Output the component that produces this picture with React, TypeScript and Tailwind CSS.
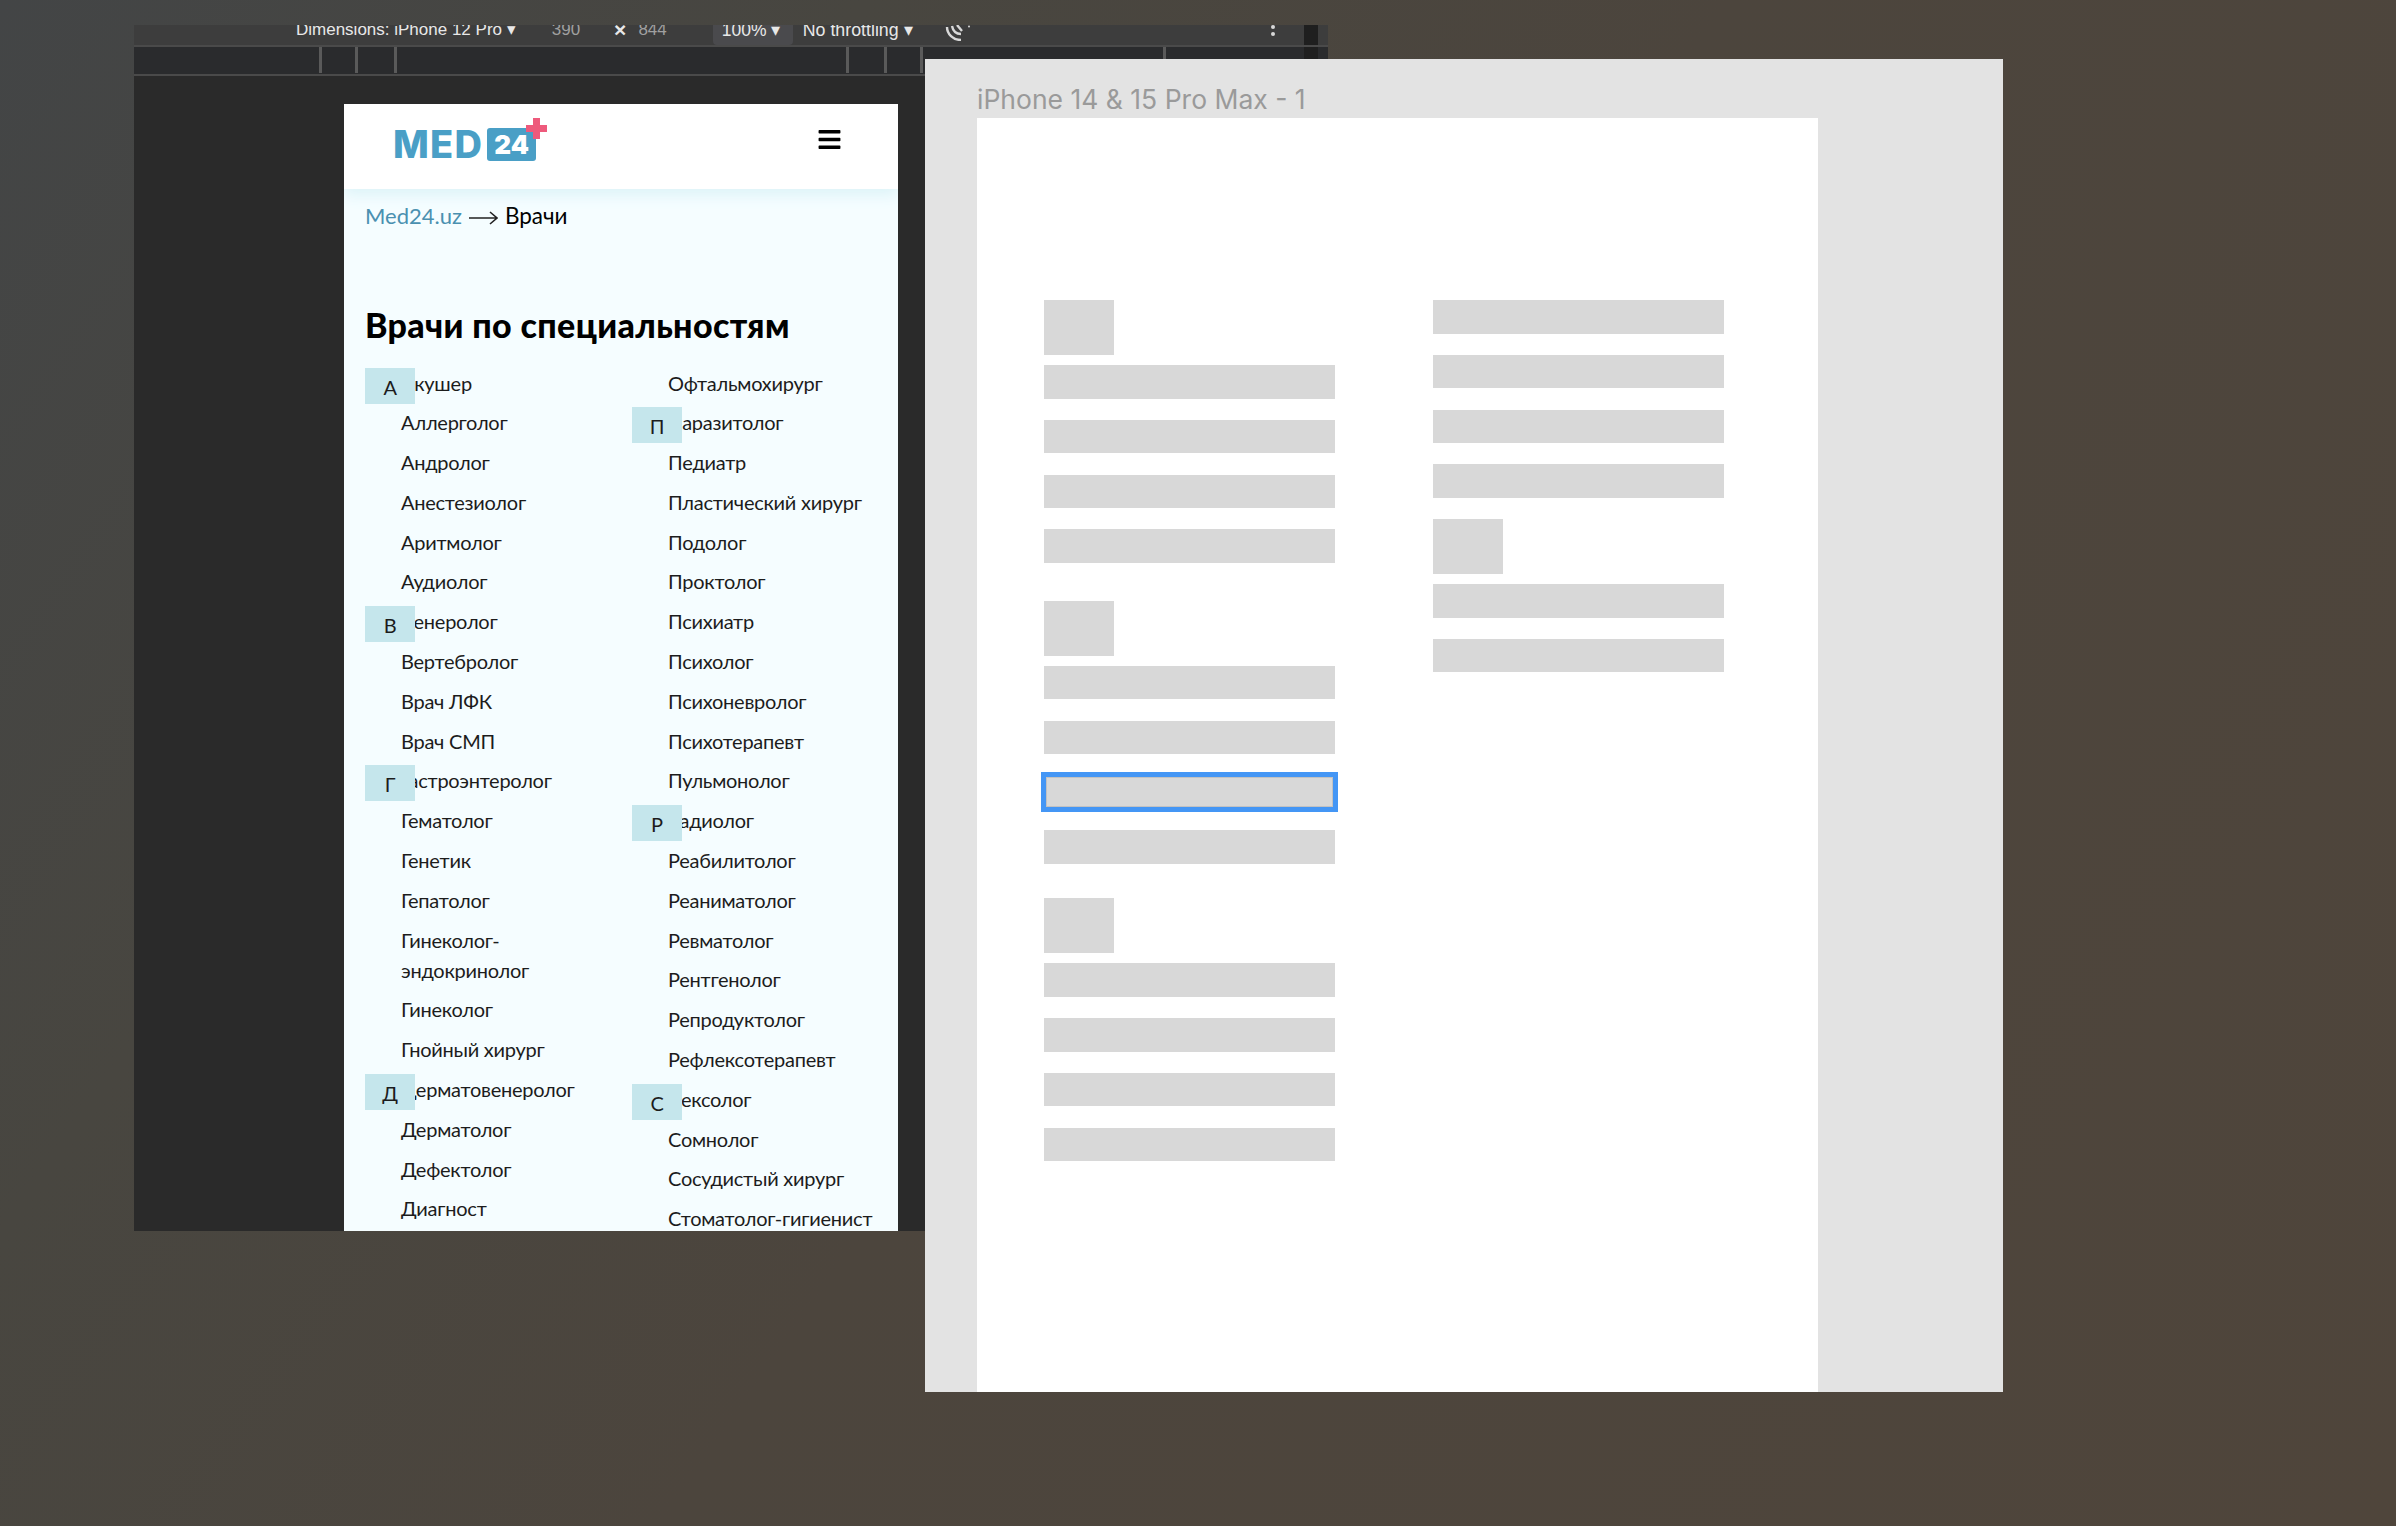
import { FC } from 'react';
import { FaBars } from 'react-icons/fa';

type Spec = { name: string; letter?: string };

const leftColumn: Spec[] = [
  { name: 'Акушер', letter: 'А' },
  { name: 'Аллерголог' },
  { name: 'Андролог' },
  { name: 'Анестезиолог' },
  { name: 'Аритмолог' },
  { name: 'Аудиолог' },
  { name: 'Венеролог', letter: 'В' },
  { name: 'Вертебролог' },
  { name: 'Врач ЛФК' },
  { name: 'Врач СМП' },
  { name: 'Гастроэнтеролог', letter: 'Г' },
  { name: 'Гематолог' },
  { name: 'Генетик' },
  { name: 'Гепатолог' },
  { name: 'Гинеколог- эндокринолог' },
  { name: 'Гинеколог' },
  { name: 'Гнойный хирург' },
  { name: 'Дерматовенеролог', letter: 'Д' },
  { name: 'Дерматолог' },
  { name: 'Дефектолог' },
  { name: 'Диагност' },
];

const rightColumn: Spec[] = [
  { name: 'Офтальмохирург' },
  { name: 'Паразитолог', letter: 'П' },
  { name: 'Педиатр' },
  { name: 'Пластический хирург' },
  { name: 'Подолог' },
  { name: 'Проктолог' },
  { name: 'Психиатр' },
  { name: 'Психолог' },
  { name: 'Психоневролог' },
  { name: 'Психотерапевт' },
  { name: 'Пульмонолог' },
  { name: 'Радиолог', letter: 'Р' },
  { name: 'Реабилитолог' },
  { name: 'Реаниматолог' },
  { name: 'Ревматолог' },
  { name: 'Рентгенолог' },
  { name: 'Репродуктолог' },
  { name: 'Рефлексотерапевт' },
  { name: 'Сексолог', letter: 'С' },
  { name: 'Сомнолог' },
  { name: 'Сосудистый хирург' },
  { name: 'Стоматолог-гигиенист' },
];

const SpecList: FC<{ items: Spec[]; className: string }> = ({ items, className }) => (
  <ul className={`flex flex-col gap-[9.8px] ${className}`}>
    {items.map((item) => (
      <li key={item.name} className="relative text-[20px] leading-[30px] tracking-[-0.25px] text-[#1c1c1c]">
        {item.name}
        {item.letter && (
          <span className="absolute -left-[36px] top-0 flex h-[36px] w-[50px] items-center justify-center bg-[#c5e6ec] pt-[2px] text-[20px] text-[#1c1c1c]">
            {item.letter}
          </span>
        )}
      </li>
    ))}
  </ul>
);

const Logo: FC = () => (
  <div className="relative flex items-center gap-[4px] font-['Inter',sans-serif]">
    <span className="text-[38px] leading-[33px] font-extrabold tracking-[1.2px] text-[#4a9fc6]">MED</span>
    <span className="flex h-[33px] w-[49px] items-center justify-center rounded-[3px] bg-[#4a9fc6] text-[26px] font-black text-white">
      24
    </span>
    <svg className="absolute -right-[11px] -top-[10px] h-[21px] w-[21px]" viewBox="0 0 21 21">
      <path d="M7 0h7v7h7v7h-7v7H7v-7H0V7h7z" fill="#ee5a7c" />
    </svg>
  </div>
);

const PhoneViewport: FC = () => (
  <div className="ml-[210px] flex h-[1127px] w-[554px] flex-col overflow-hidden bg-[#f5fdff] font-['Lato','Noto_Sans',sans-serif]">
    <header className="z-10 flex h-[85px] shrink-0 items-start justify-between bg-white pl-[49px] pr-[56px] pt-[23px] shadow-[0_6px_14px_#dcf3f8]">
      <div className="pt-[1px]">
        <Logo />
      </div>
      <FaBars className="text-[#000]" size={25} />
    </header>
    <div className="flex items-center px-[21px] pt-[12px] text-[22px] leading-[30px]">
      <span className="text-[#4a90b0]">Med24.uz</span>
      <svg className="mx-[7px] mt-[3px] h-[14px] w-[29px]" viewBox="0 0 29 14" fill="none" stroke="#222" strokeWidth="1.6">
        <path d="M0 7h28M21 1l7 6-7 6" />
      </svg>
      <span className="text-[22.5px] text-black">Врачи</span>
    </div>
    <h1 className="px-[21px] pt-[72px] text-[34px] leading-[43px] font-black tracking-[0.35px] text-black">Врачи по специальностям</h1>
    <div className="flex items-start pt-[21.5px]">
      <SpecList items={leftColumn} className="ml-[57px] w-[210px] shrink-0" />
      <SpecList items={rightColumn} className="ml-[57px] w-[225px] shrink-0" />
    </div>
  </div>
);

const tickPositions = [188, 36, 39, 452, 38, 36, 243];

const DevTools: FC = () => (
  <section className="absolute left-[134px] top-[25px] flex h-[1206px] w-[1194px] flex-col bg-[#2a2a2a]">
    <div className="flex h-[22px] shrink-0 items-start overflow-hidden border-b-2 border-[#4a4a4a] bg-[#3d3d3d] font-['Liberation_Sans',sans-serif] text-[17px] leading-[20px] text-[#e8e8e8]">
      <span className="ml-[162px] -mt-[5px] whitespace-nowrap">Dimensions: iPhone 12 Pro ▾</span>
      <span className="ml-[36px] -mt-[5px] text-[#a0a0a0]">390</span>
      <span className="ml-[34px] -mt-[5px] text-[21px] font-bold">×</span>
      <span className="ml-[12px] -mt-[5px] text-[#a0a0a0]">844</span>
      <span className="ml-[46px] h-[20px] w-[80px] rounded-b-[4px] bg-[#4a4a4d] pl-[9px]">
        <span className="-mt-[5px] block whitespace-nowrap text-[17.5px]">100% ▾</span>
      </span>
      <span className="ml-[10px] -mt-[5px] whitespace-nowrap text-[17.8px]">No throttling ▾</span>
      <svg className="ml-[32px] h-[16px] w-[26px] shrink-0" viewBox="0 0 26 16" fill="none" stroke="#d8d8d8" strokeWidth="2.4">
        <path d="M2 2c0 7 6 13 14 13M7 1c1 5 4 8 9 8M12 0l5 6" />
        <circle cx="24" cy="1.5" r="1" fill="#d8d8d8" stroke="none" />
      </svg>
      <span className="ml-[300px] flex flex-col gap-[3px]">
        <span className="block h-[4px] w-[4px] rounded-full bg-[#d8d8d8]" />
        <span className="block h-[4px] w-[4px] rounded-full bg-[#d8d8d8]" />
      </span>
      <span className="ml-[29px] h-full w-[14px] bg-[#1f1f1f]" />
    </div>
    <div className="flex h-[29px] shrink-0 border-b-2 border-[#4a4a4a] bg-[#2a2b2d]">
      {tickPositions.map((gap, i) => (
        <span key={i} className="h-[26px] w-[3px] shrink-0 bg-[#5a5a5a]" style={{ marginLeft: gap - 3 }} />
      ))}
      <span className="ml-[138px] h-[26px] w-[14px] shrink-0 bg-[#1f1f1f]" />
    </div>
    <div className="pt-[28px]">
      <PhoneViewport />
    </div>
  </section>
);

const Bar: FC<{ selected?: boolean }> = ({ selected }) => (
  <div className="relative h-[33.5px] w-[291px] bg-[#d8d8d8]">
    {selected && (
      <div className="absolute -inset-[3px] border-[5px] border-[#4496f5]">
        <div className="h-full w-full border border-[#c2c2c2]" />
      </div>
    )}
  </div>
);

const Square: FC = () => <div className="-mb-[11.3px] h-[55px] w-[70px] bg-[#d8d8d8]" />;

const BarGroup: FC<{ className?: string; selectedIndex?: number }> = ({ className = '', selectedIndex }) => (
  <div className={`flex flex-col gap-[21.3px] ${className}`}>
    <Square />
    {[0, 1, 2, 3].map((i) => (
      <Bar key={i} selected={i === selectedIndex} />
    ))}
  </div>
);

const FigmaWindow: FC = () => (
  <section className="absolute left-[925px] top-[59px] flex h-[1333px] w-[1078px] flex-col bg-[#e3e3e3] pl-[52px] pr-[185px] font-['Inter',sans-serif]">
    <div className="h-[59px] shrink-0 pt-[22px] text-[26.5px] leading-[36px] text-[#9a9a9a]">iPhone 14 &amp; 15 Pro Max - 1</div>
    <div className="flex flex-1 items-start gap-[98px] bg-white pl-[67px] pt-[182px]">
      <div className="flex flex-col">
        <BarGroup />
        <BarGroup className="mt-[38px]" selectedIndex={2} />
        <BarGroup className="mt-[34.6px]" />
      </div>
      <div className="flex flex-col gap-[21.3px]">
        <Bar />
        <Bar />
        <Bar />
        <Bar />
        <Square />
        <Bar />
        <Bar />
      </div>
    </div>
  </section>
);

const App: FC = () => (
  <main className="relative h-[1526px] w-[2396px] overflow-hidden bg-[linear-gradient(125deg,#434546_0%,#484640_25%,#4c453d_50%,#4f453b_100%)]">
    <DevTools />
    <FigmaWindow />
  </main>
);

export default App;
